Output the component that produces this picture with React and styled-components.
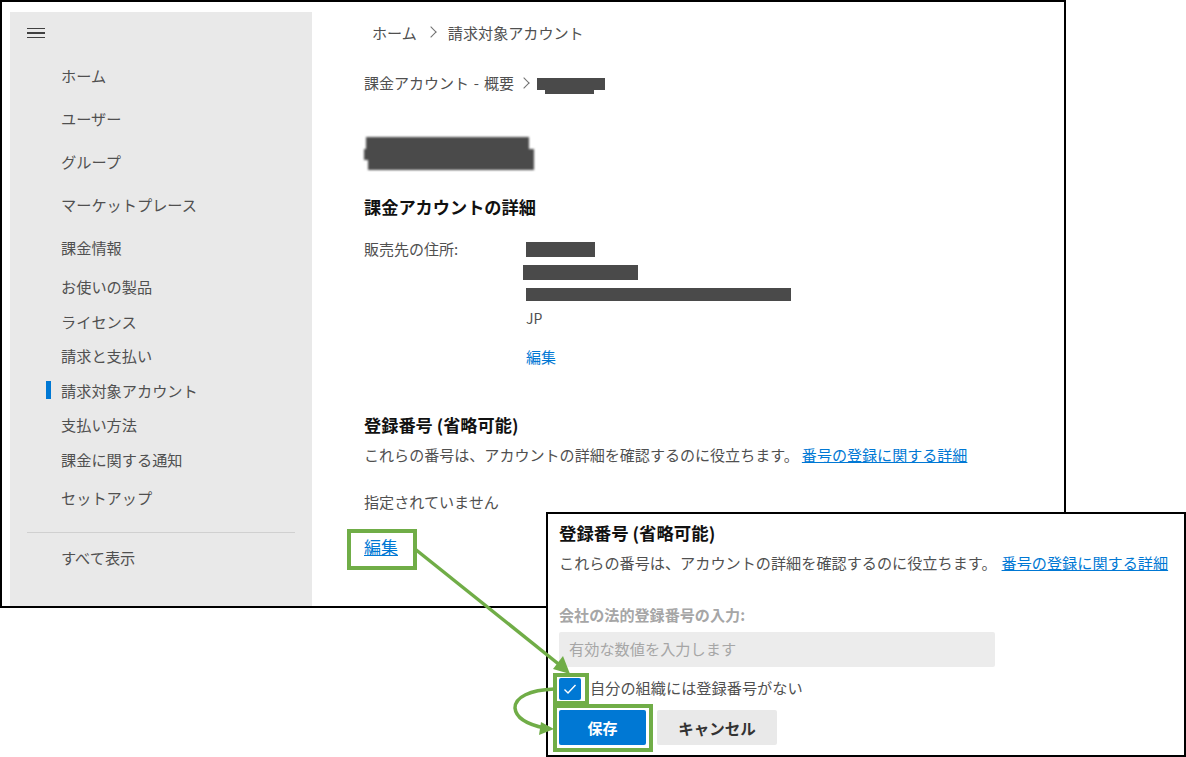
import React from 'react';
import styled, {createGlobalStyle} from 'styled-components';

const GlobalStyle = createGlobalStyle`
  html, body {
    margin: 0;
    padding: 0;
    background: #fff;
  }
  * {
    box-sizing: border-box;
  }
  body {
    font-family: "Noto Sans CJK JP", "Noto Sans", sans-serif;
    font-size: 15px;
    line-height: 22px;
    color: #505050;
  }
`;

const NAV_ITEMS = [
  {label: 'ホーム', h: 43},
  {label: 'ユーザー', h: 43},
  {label: 'グループ', h: 43},
  {label: 'マーケットプレース', h: 43},
  {label: '課金情報', h: 43},
  {label: 'お使いの製品', h: 35},
  {label: 'ライセンス', h: 35},
  {label: '請求と支払い', h: 34},
  {label: '請求対象アカウント', h: 35, active: true},
  {label: '支払い方法', h: 34},
  {label: '課金に関する通知', h: 35},
  {label: 'セットアップ', h: 41},
];

const HEADING_STRIPS = [
  {left: 2, w: 163, h: 12},
  {left: 0, w: 170, h: 11},
  {left: 4, w: 166, h: 10},
];

const App = () => {
  return (
    <ScPage>
      <GlobalStyle />
      <ScFrame>
        <ScSidebar>
          <ScMenuRow>
            <ScBurger aria-label="menu">
              <span />
              <span />
              <span />
            </ScBurger>
          </ScMenuRow>
          {NAV_ITEMS.map((item) => (
            <ScNavItem key={item.label} $h={item.h} $active={item.active}>
              {item.label}
            </ScNavItem>
          ))}
          <ScDivider />
          <ScNavItem $h={50}>すべて表示</ScNavItem>
        </ScSidebar>
        <ScMain>
          <ScTopCrumb>
            ホーム
            <ScChevron $l={10} $r={13} />
            請求対象アカウント
          </ScTopCrumb>
          <ScSubCrumb>
            課金アカウント - 概要
            <ScChevron $l={6} $r={9} />
            <ScCrumbRedact>
              <ScRedact $w={68} $h={12} $tail />
            </ScCrumbRedact>
          </ScSubCrumb>
          <ScRedactHeading>
            {HEADING_STRIPS.map((strip) => (
              <ScHeadingStrip key={strip.left} $left={strip.left} $w={strip.w} $h={strip.h} />
            ))}
          </ScRedactHeading>
          <ScSectionTitle $top={25}>課金アカウントの詳細</ScSectionTitle>
          <ScAddress>
            <span>販売先の住所:</span>
            <ScAddressLines>
              <ScAddressLine $h={24}>
                <ScRedact $w={69} $h={15} />
              </ScAddressLine>
              <ScAddressLine $h={22} $shift={-3}>
                <ScRedact $w={115} $h={15} />
              </ScAddressLine>
              <ScAddressLine $h={23}>
                <ScRedact $w={265} $h={13} />
              </ScAddressLine>
              <ScAddressLine $h={24}>JP</ScAddressLine>
              <ScPlainLink>編集</ScPlainLink>
            </ScAddressLines>
          </ScAddress>
          <ScSectionTitle $top={45}>登録番号 (省略可能)</ScSectionTitle>
          <ScDescription>
            これらの番号は、アカウントの詳細を確認するのに役立ちます。
            <ScLink>番号の登録に関する詳細</ScLink>
          </ScDescription>
          <ScNotSet>指定されていません</ScNotSet>
          <ScEditLink>編集</ScEditLink>
        </ScMain>
      </ScFrame>

      <ScPopup>
        <ScPopupTitle>登録番号 (省略可能)</ScPopupTitle>
        <ScPopupDescription>
          これらの番号は、アカウントの詳細を確認するのに役立ちます。
          <ScPopupLink>番号の登録に関する詳細</ScPopupLink>
        </ScPopupDescription>
        <ScFieldLabel>会社の法的登録番号の入力:</ScFieldLabel>
        <ScInput>有効な数値を入力します</ScInput>
        <ScCheckRow>
          <ScCheckbox>
            <svg width="14" height="12" viewBox="0 0 14 12" fill="none">
              <path d="M1.5 6.5 L5 10 L12.5 2" stroke="#fff" strokeWidth="1.4" />
            </svg>
          </ScCheckbox>
          <ScCheckLabel>自分の組織には登録番号がない</ScCheckLabel>
        </ScCheckRow>
        <ScButtons>
          <ScSaveButton>保存</ScSaveButton>
          <ScCancelButton>キャンセル</ScCancelButton>
        </ScButtons>
      </ScPopup>

      <ScArrows width="1186" height="757" viewBox="0 0 1186 757" fill="none">
        <path d="M415 549 L561 666" stroke="#70ad47" strokeWidth="3.5" />
        <path d="M570 674 L553 669 L563 656 Z" fill="#70ad47" />
        <path
          d="M554 689 C530 690 515 697 515 708 C516 719 530 725 545 728"
          stroke="#70ad47"
          strokeWidth="3.5"
        />
        <path d="M554 729 L541 722 L539 735 Z" fill="#70ad47" />
      </ScArrows>
      <ScHighlight $x={347} $y={529} $w={70} $h={41} />
      <ScHighlight $x={553} $y={673} $w={36} $h={32} />
      <ScHighlight $x={553} $y={704} $w={100} $h={48} />
    </ScPage>
  );
};

export default App;

const ScPage = styled.div`
  position: relative;
  width: 1186px;
  height: 757px;
  overflow: hidden;
`;

const ScFrame = styled.div`
  width: 1066px;
  height: 608px;
  border: 2px solid #000;
  padding: 10px 0 0 8px;
  display: flex;
`;

const ScSidebar = styled.nav`
  width: 302px;
  flex-shrink: 0;
  background: #e9e9e9;
  display: flex;
  flex-direction: column;
`;

const ScMenuRow = styled.div`
  height: 42px;
  padding-left: 17px;
  display: flex;
  align-items: center;
`;

const ScBurger = styled.div`
  width: 18px;
  display: flex;
  flex-direction: column;
  gap: 3px;
  & span {
    display: block;
    height: 1.5px;
    background: #404040;
  }
`;

const ScNavItem = styled.div`
  position: relative;
  height: ${(p) => p.$h}px;
  padding: 0 0 2px 51px;
  display: flex;
  align-items: center;
  font-size: 15.2px;
  color: #505050;
  &::before {
    content: '';
    display: ${(p) => (p.$active ? 'block' : 'none')};
    position: absolute;
    left: 36px;
    top: 8px;
    width: 5px;
    height: 18px;
    background: #0078d4;
  }
`;

const ScDivider = styled.div`
  height: 1px;
  margin: 14px 17px 0 17px;
  background: #d0d0d0;
`;

const ScMain = styled.main`
  flex: 1;
  padding-left: 52px;
  display: flex;
  flex-direction: column;
  align-items: flex-start;
`;

const ScTopCrumb = styled.div`
  margin: 9px 0 0 8px;
  display: flex;
  align-items: center;
  font-size: 15.1px;
`;

const ScSubCrumb = styled.div`
  margin-top: 29px;
  display: flex;
  align-items: center;
  word-spacing: 1.5px;
`;

const ScCrumbRedact = styled.span`
  padding-top: 2px;
`;

const ScChevron = styled.i`
  width: 8px;
  height: 8px;
  margin: 0 ${(p) => p.$r}px 0 ${(p) => p.$l}px;
  border-top: 1px solid #707070;
  border-right: 1px solid #707070;
  transform: rotate(45deg);
`;

const ScRedact = styled.span`
  position: relative;
  display: block;
  width: ${(p) => p.$w}px;
  height: ${(p) => p.$h}px;
  background: #4a4a4a;
  filter: blur(0.7px);
  &::after {
    content: '';
    display: ${(p) => (p.$tail ? 'block' : 'none')};
    position: absolute;
    left: 8px;
    top: 100%;
    width: 49px;
    height: 4px;
    background: #4a4a4a;
  }
`;

const ScRedactHeading = styled.div`
  margin-top: 43px;
  display: flex;
  flex-direction: column;
  filter: blur(1px);
`;

const ScHeadingStrip = styled.span`
  display: block;
  width: ${(p) => p.$w}px;
  height: ${(p) => p.$h}px;
  margin-left: ${(p) => p.$left}px;
  background: #4a4a4a;
`;

const ScSectionTitle = styled.h2`
  margin: ${(p) => p.$top}px 0 0;
  font-size: 17.2px;
  line-height: 24px;
  font-weight: 700;
  color: #111;
`;

const ScAddress = styled.div`
  margin-top: 19px;
  display: grid;
  grid-template-columns: 162px 1fr;
`;

const ScAddressLines = styled.div`
  display: flex;
  flex-direction: column;
  margin-top: -1px;
`;

const ScAddressLine = styled.div`
  height: ${(p) => p.$h}px;
  margin-left: ${(p) => p.$shift || 0}px;
  display: flex;
  align-items: center;
  font-size: 14px;
`;

const ScPlainLink = styled.span`
  margin-top: 16px;
  color: #0078d4;
`;

const ScDescription = styled.p`
  margin: 7px 0 0;
  font-size: 15.05px;
`;

const ScPopupDescription = styled.p`
  margin: 6px 0 0;
  font-size: 15.15px;
`;

const ScLink = styled.a`
  margin-left: 3px;
  color: #0078d4;
  text-decoration: underline;
`;

const ScPopupLink = styled(ScLink)`
  margin-left: 5px;
`;

const ScNotSet = styled.p`
  margin: 24px 0 0;
  font-size: 15.1px;
`;

const ScEditLink = styled.a`
  margin-top: 23px;
  font-size: 17px;
  line-height: 24px;
  color: #0078d4;
  text-decoration: underline;
`;

const ScPopup = styled.section`
  position: absolute;
  left: 546px;
  top: 512px;
  width: 640px;
  height: 245px;
  padding: 7px 0 0 11px;
  background: #fff;
  border: 2px solid #000;
`;

const ScPopupTitle = styled.h3`
  margin: 0;
  font-size: 17.4px;
  line-height: 24px;
  font-weight: 700;
  color: #111;
`;

const ScFieldLabel = styled.div`
  margin-top: 30px;
  font-weight: 700;
  font-size: 15.1px;
  color: #a6a6a6;
`;

const ScInput = styled.div`
  width: 436px;
  height: 35px;
  margin-top: 7px;
  padding: 0 0 3px 10px;
  display: flex;
  align-items: center;
  background: #ececec;
  border-radius: 2px;
  font-size: 15.2px;
  color: #a6a6a6;
`;

const ScCheckRow = styled.div`
  margin-top: 10px;
  display: flex;
  align-items: center;
  gap: 9px;
  height: 23px;
  font-size: 15.2px;
`;

const ScCheckLabel = styled.span`
  padding-bottom: 3px;
`;

const ScCheckbox = styled.span`
  width: 22px;
  height: 22px;
  display: flex;
  align-items: center;
  justify-content: center;
  background: #0078d4;
  border-radius: 2px;
`;

const ScButtons = styled.div`
  margin-top: 10px;
  display: flex;
  gap: 11px;
`;

const ScSaveButton = styled.button`
  width: 87px;
  height: 35px;
  border: 0;
  border-radius: 2px;
  padding: 0;
  background: #0078d4;
  color: #fff;
  font: 700 15px/22px "Noto Sans CJK JP", sans-serif;
`;

const ScCancelButton = styled.button`
  width: 120px;
  height: 35px;
  border: 0;
  border-radius: 2px;
  padding: 0;
  background: #e9e9e9;
  color: #333;
  font: 700 15.5px/22px "Noto Sans CJK JP", sans-serif;
`;

const ScArrows = styled.svg`
  position: absolute;
  left: 0;
  top: 0;
  pointer-events: none;
`;

const ScHighlight = styled.div`
  position: absolute;
  left: ${(p) => p.$x}px;
  top: ${(p) => p.$y}px;
  width: ${(p) => p.$w}px;
  height: ${(p) => p.$h}px;
  border: 4px solid #70ad47;
  pointer-events: none;
`;
